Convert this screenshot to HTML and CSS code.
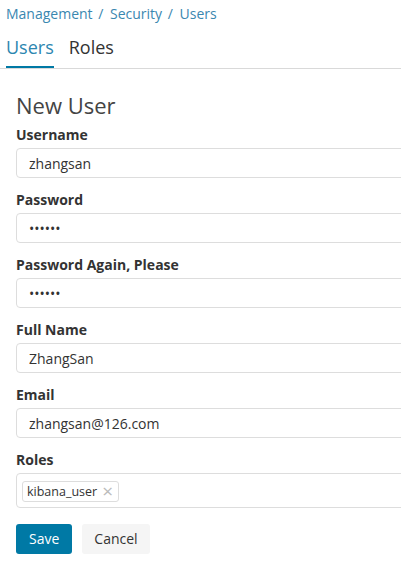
FILE: index.html
```html
<!DOCTYPE html>
<html lang="en">
<head>
    <meta charset="UTF-8">
    <meta name="viewport" content="width=device-width, initial-scale=1.0">
    <title>New User</title>
    <link rel="stylesheet" href="styles.css">
</head>
<body>
    <div class="breadcrumbs">
        <a href="#">Management</a> <span class="sep">/</span>
        <a href="#">Security</a> <span class="sep">/</span>
        <a href="#">Users</a>
    </div>
    <div class="tabs">
        <a class="tab active" href="#">Users</a>
        <a class="tab" href="#">Roles</a>
    </div>
    <form class="user-form">
        <h1>New User</h1>
        <div class="form-group">
            <label for="username">Username</label>
            <input type="text" id="username" value="zhangsan">
        </div>
        <div class="form-group">
            <label for="password">Password</label>
            <input type="password" id="password" value="123456">
        </div>
        <div class="form-group">
            <label for="password2">Password Again, Please</label>
            <input type="password" id="password2" value="123456">
        </div>
        <div class="form-group">
            <label for="full_name">Full Name</label>
            <input type="text" id="full_name" value="ZhangSan">
        </div>
        <div class="form-group">
            <label for="email">Email</label>
            <input type="text" id="email" value="zhangsan@126.com">
        </div>
        <div class="form-group">
            <label>Roles</label>
            <div class="roles-box">
                <span class="tag">kibana_user<span class="tag-remove">&times;</span></span>
            </div>
        </div>
        <div class="actions">
            <button type="button" class="btn btn-primary">Save</button>
            <button type="button" class="btn btn-default">Cancel</button>
        </div>
    </form>
</body>
</html>
```

FILE: styles.css
```css
body {
    margin: 0;
    font-family: "Open Sans", Arial, sans-serif;
    color: #333;
    overflow: hidden;
}
.breadcrumbs {
    padding: 4px 6px 0;
    font-size: 14px;
    line-height: 20px;
    color: #3a87b0;
}
.breadcrumbs a {
    color: #3a87b0;
    text-decoration: none;
}
.breadcrumbs .sep {
    margin: 0 3px 0 2px;
}
.tabs {
    display: flex;
    gap: 15px;
    margin-top: 11px;
    padding-left: 6px;
    border-bottom: 1px solid #d9d9d9;
}
.tab {
    font-size: 18px;
    line-height: 24px;
    padding-bottom: 7px;
    border-bottom: 2px solid transparent;
    color: #333;
    text-decoration: none;
}
.tab.active {
    color: #2c86b0;
    border-bottom-color: #0079a5;
}
.user-form {
    width: 420px;
    padding: 0 0 0 16px;
}
h1 {
    margin: 21px 0 5px;
    font-size: 22px;
    line-height: 30px;
    font-weight: 400;
    color: #444;
}
.form-group {
    margin-bottom: 12px;
}
label {
    display: block;
    font-size: 14px;
    line-height: 20px;
    font-weight: 700;
    margin-bottom: 3px;
}
input[type="text"], input[type="password"] {
    display: block;
    box-sizing: border-box;
    width: 100%;
    height: 30px;
    padding: 0 12px;
    border: 1px solid #ddd;
    border-radius: 4px;
    font-family: inherit;
    font-size: 14px;
    color: #333;
}
.roles-box {
    box-sizing: border-box;
    height: 35px;
    padding: 5px;
    border: 1px solid #ddd;
    border-radius: 4px;
}
.tag {
    display: inline-flex;
    align-items: center;
    box-sizing: border-box;
    height: 21px;
    padding: 0 5px 0 4px;
    border: 1px solid #ddd;
    border-radius: 3px;
    font-size: 12.5px;
    line-height: 19px;
    color: #333;
}
.tag-remove {
    margin-left: 5px;
    color: #bbb;
    font-size: 19px;
    line-height: 19px;
}
.actions {
    display: flex;
    gap: 10px;
    margin-top: 16px;
}
.btn {
    height: 30px;
    padding: 0 13px;
    border: none;
    border-radius: 3px;
    font-family: inherit;
    font-size: 14px;
    line-height: 28px;
    cursor: pointer;
}
.btn-primary {
    background-color: #0079a5;
    color: white;
}
.btn-default {
    background-color: #f5f5f5;
    color: #333;
    padding: 0 12px;
}
```
